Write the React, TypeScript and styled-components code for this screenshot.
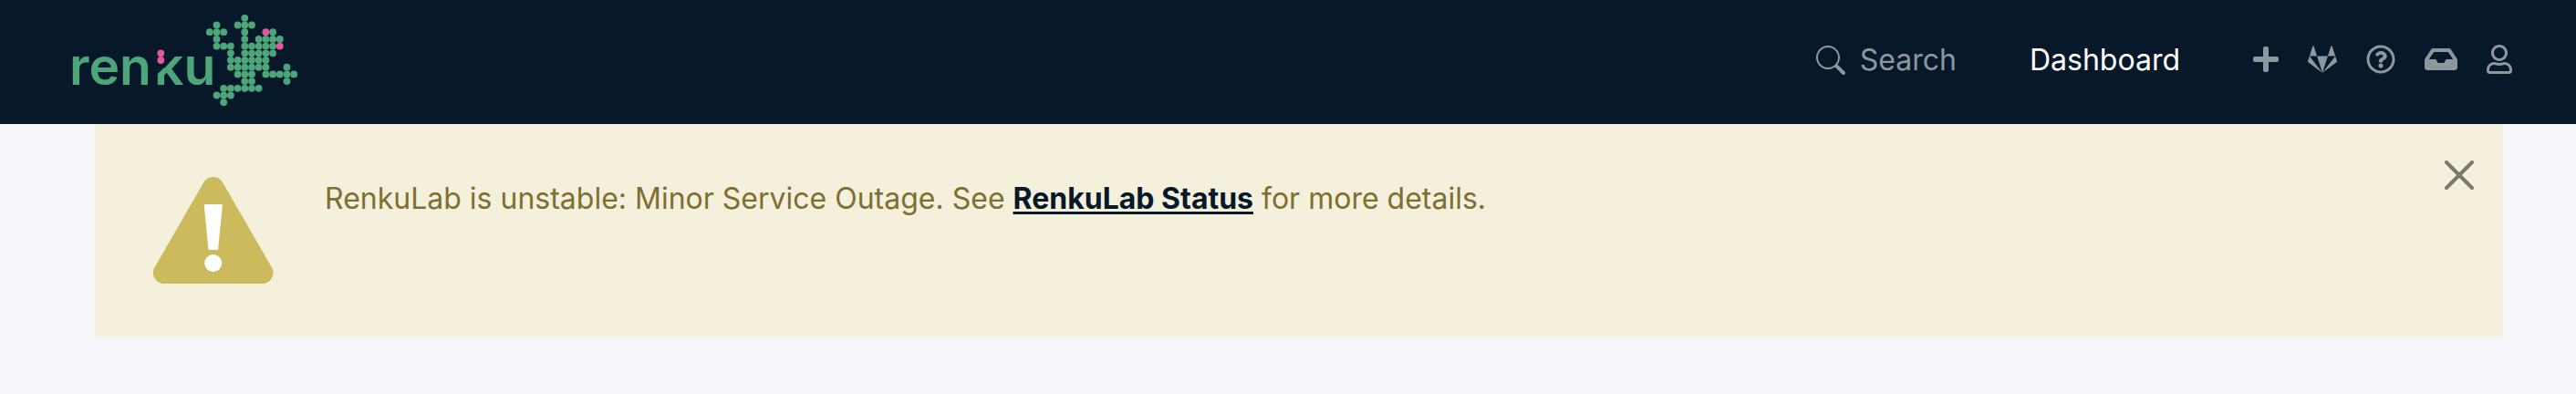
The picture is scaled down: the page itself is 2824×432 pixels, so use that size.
import React from "react";
import styled, { createGlobalStyle } from "styled-components";
import { BsSearch } from "react-icons/bs";
import { FaPlus, FaGitlab, FaRegQuestionCircle, FaInbox, FaRegUser } from "react-icons/fa";

const colors = {
  navy: "#061829",
  page: "#f4f6fa",
  green: "#4da67a",
  pink: "#e4579f",
  muted: "#8f979e",
  banner: "#f5f0dc",
  bannerText: "#7d6f2f",
  warning: "#cbbb5c",
};

const GlobalStyle = createGlobalStyle`
  *, *::before, *::after { box-sizing: border-box; }
  body {
    margin: 0;
    background: ${colors.page};
    font-family: Inter, "Liberation Sans", sans-serif;
    font-size: 32px;
    line-height: 48px;
  }
`;

const Header = styled.header`
  display: flex;
  align-items: center;
  justify-content: space-between;
  padding: 14px 70px 20px;
  background: ${colors.navy};
`;

const HomeLink = styled.a`
  display: block;
`;

const LogoSvg = styled.svg`
  display: block;
  width: 260px;
  height: 102px;
`;

const Wordmark = styled.text`
  font-family: Inter, sans-serif;
  font-size: 57px;
  font-weight: 600;
  fill: ${colors.green};
`;

const Nav = styled.nav`
  display: flex;
  align-items: center;
`;

const NavLink = styled.a<{ $active?: boolean }>`
  display: flex;
  align-items: center;
  gap: 16px;
  margin-right: 80px;
  padding-top: 2px;
  color: ${({ $active }) => ($active ? "#fff" : colors.muted)};
  text-decoration: none;
`;

const IconGroup = styled.div`
  display: flex;
  align-items: center;
  gap: 32px;
`;

const IconButton = styled.button<{ $width: number }>`
  display: flex;
  padding: 0;
  border: 0;
  background: none;
  color: ${colors.muted};
  cursor: pointer;

  svg {
    width: ${({ $width }) => $width}px;
    height: 32px;
  }
`;

const Banner = styled.section`
  display: flex;
  align-items: flex-start;
  gap: 56px;
  margin: 0 80px 0 104px;
  padding: 56px 32px 56px 64px;
  background: ${colors.banner};
  color: ${colors.bannerText};
`;

const WarningSvg = styled.svg`
  flex: none;
  display: block;
  width: 132px;
  height: 121px;
`;

const Message = styled.p`
  flex: 1;
  margin: 0;
  padding-top: 2px;
`;

const StatusLink = styled.a`
  color: ${colors.navy};
  font-weight: 700;
  text-decoration: underline;
  text-decoration-thickness: 3px;
  text-underline-offset: 3px;
  text-decoration-skip-ink: none;
`;

const CloseButton = styled.button`
  flex: none;
  display: flex;
  margin: -16px 0 0;
  padding: 0;
  border: 0;
  background: none;
  color: #7b7870;
  cursor: pointer;
`;

const GRID = 7.7;

/* Columns of the green dots in each row of the gecko. */
const dotRows: number[][] = [
  [5],
  [1, 4, 5, 6],
  [0, 1, 2, 5, 9],
  [1, 5, 7, 8, 9, 10],
  [1, 2, 3, 5, 6, 7, 8, 9],
  [3, 5, 6, 7, 8, 9],
  [3, 4, 5, 6, 7, 8],
  [3, 4, 5, 6, 7, 8, 11],
  [4, 5, 6, 8, 9, 10, 11, 12],
  [5, 6, 11],
  [2, 3, 4, 5, 6, 7],
  [1, 2, 3],
  [2],
];

const eyes = [
  [8, 2],
  [10, 4],
];

function Logo() {
  return (
    <LogoSvg viewBox="70 14 260 102" aria-hidden="true">
      <Wordmark x="76" y="93">
        ren
      </Wordmark>
      <Wordmark x="169" y="93">
        ku
      </Wordmark>
      <path d="M170 45H184V70L173 81H170Z" fill={colors.navy} />
      <g fill={colors.pink}>
        <circle cx="176.3" cy="58.3" r="3.9" />
        <circle cx="176.3" cy="66" r="3.9" />
        {eyes.map(([c, r]) => (
          <circle key={`${c}-${r}`} cx={229.8 + c * GRID} cy={19.8 + r * GRID} r="3.9" />
        ))}
      </g>
      <g fill={colors.green}>
        {dotRows.map((cols, r) =>
          cols.map((c) => (
            <circle key={`${c}-${r}`} cx={229.8 + c * GRID} cy={19.8 + r * GRID} r="3.9" />
          ))
        )}
      </g>
    </LogoSvg>
  );
}

export default function App() {
  return (
    <>
      <GlobalStyle />
      <Header>
        <HomeLink href="#" aria-label="Renku home">
          <Logo />
        </HomeLink>
        <Nav>
          <NavLink href="#search">
            <BsSearch />
            Search
          </NavLink>
          <NavLink href="#dashboard" $active>
            Dashboard
          </NavLink>
          <IconGroup>
            <IconButton $width={28} aria-label="Create">
              <FaPlus />
            </IconButton>
            <IconButton $width={32} aria-label="GitLab">
              <FaGitlab />
            </IconButton>
            <IconButton $width={32} aria-label="Help">
              <FaRegQuestionCircle />
            </IconButton>
            <IconButton $width={36} aria-label="Notifications">
              <FaInbox />
            </IconButton>
            <IconButton $width={28} aria-label="Account">
              <FaRegUser />
            </IconButton>
          </IconGroup>
        </Nav>
      </Header>
      <main>
        <Banner role="alert">
          <WarningSvg viewBox="0 0 132 121" aria-hidden="true">
            <path
              d="M55.300 8A12 12 0 0 1 76.100 8L129.800 101A12 12 0 0 1 119.400 119H12A12 12 0 0 1 1.600 101Z"
              fill={colors.warning}
            />
            <path d="M55.700 32H76L71 82H60.500Z" fill="#fff" />
            <circle cx="65.700" cy="96.500" r="9.500" fill="#fff" />
          </WarningSvg>
          <Message>
            RenkuLab is unstable: Minor Service Outage. See{" "}
            <StatusLink href="#status">RenkuLab Status</StatusLink> for more details.
          </Message>
          <CloseButton aria-label="Close">
            <svg width="32" height="32" viewBox="0 0 32 32">
              <path d="M2 2L30 30M30 2L2 30" stroke="currentColor" strokeWidth="4" strokeLinecap="round" />
            </svg>
          </CloseButton>
        </Banner>
      </main>
    </>
  );
}
